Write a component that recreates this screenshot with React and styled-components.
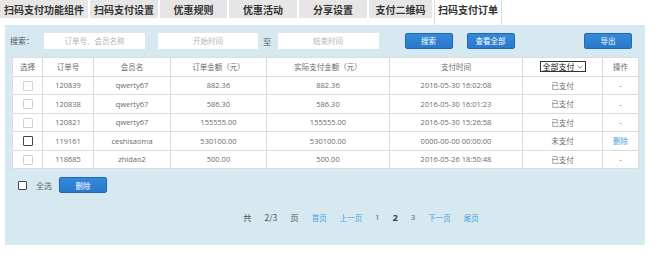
import styled, { createGlobalStyle } from "styled-components"

const Global = createGlobalStyle`
body{
margin:0;
background:#fff;
font-family:"Open Sans","Noto Sans CJK SC",sans-serif;
color:#666;
}
`;

const Tabs = styled.div`
display:flex;
gap:2px;
height:18px;
`;
const Tab = styled.div`
width:${p => p.w}px;
display:flex;
align-items:center;
justify-content:center;
font-family:"Noto Sans CJK SC",sans-serif;
font-weight:700;
font-size:10px;
color:#333;
background:${p => p.active ? "#fff" : "#e6e6e6"};
box-sizing:border-box;
border-left:${p => p.active ? "1px solid #dcdcdc" : "none"};
border-right:${p => p.active ? "1px solid #dcdcdc" : "none"};
height:${p => p.active ? "25px" : "18px"};
align-self:flex-start;
padding-bottom:${p => p.active ? "7px" : "0"};
`;

const Panel = styled.div`
margin:7px 0 0 5px;
width:640px;
height:220px;
background:#d6e9f1;
box-sizing:border-box;
`;

const SearchBar = styled.div`
display:flex;
align-items:center;
padding:7px 13px 0 5px;
height:17px;
`;
const Label = styled.span`
width:34px;
font-family:"Noto Sans CJK SC",sans-serif;
font-size:8px;
color:#555;
`;
const Input = styled.div`
width:${p => p.w}px;
height:16px;
margin-right:${p => p.mr || 0}px;
background:#fff;
display:flex;
align-items:center;
justify-content:center;
font-family:"Noto Sans CJK SC",sans-serif;
font-size:7.5px;
color:#b5b5b5;
`;
const To = styled.span`
font-family:"Noto Sans CJK SC",sans-serif;
font-size:8.5px;
color:#555;
margin:0 6px 0 5px;
`;
const Button = styled.div`
width:48px;
height:16px;
margin-left:${p => p.ml || 0};
box-sizing:border-box;
background:linear-gradient(#3689da,#2878cc);
border:1px solid #1f68b6;
border-radius:2px;
color:#fff;
font-family:"Noto Sans CJK SC",sans-serif;
font-size:7.5px;
display:flex;
align-items:center;
justify-content:center;
`;

const Table = styled.table`
margin:8px 0 0 7px;
width:626px;
border-collapse:collapse;
background:#fff;
table-layout:fixed;
`;
const Th = styled.th`
height:17.5px;
padding:0;
border:1px solid #dcdcdc;
font-weight:400;
font-family:"Noto Sans CJK SC",sans-serif;
font-size:7.5px;
color:#6a6a6a;
text-align:center;
`;
const Td = styled.td`
height:17.5px;
padding:0;
border:1px solid #dcdcdc;
font-size:7.5px;
font-family:"Open Sans","Noto Sans CJK SC",sans-serif;
color:${p => p.link ? "#4aa0dd" : "#6a6a6a"};
text-align:center;
`;
const Check = styled.span`
display:inline-block;
vertical-align:middle;
width:${p => p.size || 8}px;
height:${p => p.size || 8}px;
border:1px solid ${p => p.dark ? "#444" : "#d2d2d2"};
background:#fff;
border-radius:1px;
`;
const Select = styled.span`
display:inline-flex;
align-items:center;
gap:2px;
height:9px;
padding:0 2px;
border:1px solid #333;
font-family:"Noto Sans CJK SC",sans-serif;
font-size:8px;
color:#111;
`;

const Bottom = styled.div`
display:flex;
align-items:center;
padding-left:13px;
margin-top:8px;
height:16px;
`;
const AllText = styled.span`
font-family:"Noto Sans CJK SC",sans-serif;
font-size:8px;
color:#666;
margin:0 7px 0 9px;
`;

const Pager = styled.div`
display:flex;
align-items:center;
gap:13px;
padding-left:238px;
margin-top:18px;
height:12px;
font-family:"Noto Sans CJK SC",sans-serif;
`;
const PText = styled.span`
font-size:8.5px;
color:#555;
`;
const PLink = styled.span`
font-size:7.5px;
color:#4a9fe0;
`;
const PNum = styled.span`
font-family:"Open Sans",sans-serif;
font-size:${p => p.cur ? "9.5px" : "7.5px"};
font-weight:${p => p.cur ? 700 : 400};
color:${p => p.cur ? "#444" : "#555"};
`;

const tabs = [
  ["扫码支付功能组件", 88], ["扫码支付设置", 68], ["优惠规则", 67], ["优惠活动", 68],
  ["分享设置", 68], ["支付二维码", 63], ["扫码支付订单", 68],
]

const rows = [
  { id: "120839", name: "qwerty67", amount: "882.36", paid: "882.36", time: "2016-05-30 16:02:08", st: "已支付" },
  { id: "120838", name: "qwerty67", amount: "586.30", paid: "586.30", time: "2016-05-30 16:01:23", st: "已支付" },
  { id: "120821", name: "qwerty67", amount: "155555.00", paid: "155555.00", time: "2016-05-30 15:26:58", st: "已支付" },
  { id: "119161", name: "ceshisaoma", amount: "530100.00", paid: "530100.00", time: "0000-00-00 00:00:00", st: "未支付", unpaid: true },
  { id: "118685", name: "zhidao2", amount: "500.00", paid: "500.00", time: "2016-05-26 18:50:48", st: "已支付" },
]

const cols = [30, 51, 77, 96, 123, 133, 80, 36]

export default function App() {
  return (
    <>
      <Global />
      <Tabs>
        {tabs.map(([t, w], i) => (
          <Tab key={t} w={w} active={i === tabs.length - 1}>{t}</Tab>
        ))}
      </Tabs>
      <Panel>
        <SearchBar>
          <Label>搜索：</Label>
          <Input w={101} mr={13}>订单号、会员名称</Input>
          <Input w={100}>开始时间</Input>
          <To>至</To>
          <Input w={101}>结束时间</Input>
          <Button ml="26px">搜索</Button>
          <Button ml="14px">查看全部</Button>
          <Button ml="auto">导出</Button>
        </SearchBar>
        <Table>
          <colgroup>
            {cols.map((w, i) => <col key={i} style={{ width: w }} />)}
          </colgroup>
          <thead>
            <tr>
              <Th>选择</Th>
              <Th>订单号</Th>
              <Th>会员名</Th>
              <Th>订单金额（元）</Th>
              <Th>实际支付金额（元）</Th>
              <Th>支付时间</Th>
              <Th>
                <Select>
                  全部支付
                  <svg width="6" height="4" viewBox="0 0 6 4">
                    <path d="M0.5 0.8 L3 3.2 L5.5 0.8" fill="none" stroke="#666" strokeWidth="0.8" />
                  </svg>
                </Select>
              </Th>
              <Th>操作</Th>
            </tr>
          </thead>
          <tbody>
            {rows.map(r => (
              <tr key={r.id}>
                <Td><Check size={8} dark={r.unpaid} /></Td>
                <Td>{r.id}</Td>
                <Td>{r.name}</Td>
                <Td>{r.amount}</Td>
                <Td>{r.paid}</Td>
                <Td>{r.time}</Td>
                <Td>{r.st}</Td>
                <Td link={r.unpaid}>{r.unpaid ? "删除" : "-"}</Td>
              </tr>
            ))}
          </tbody>
        </Table>
        <Bottom>
          <Check size={7} dark />
          <AllText>全选</AllText>
          <Button>删除</Button>
        </Bottom>
        <Pager>
          <PText>共</PText>
          <PText>2/3</PText>
          <PText>页</PText>
          <PLink>首页</PLink>
          <PLink>上一页</PLink>
          <PNum>1</PNum>
          <PNum cur>2</PNum>
          <PNum>3</PNum>
          <PLink>下一页</PLink>
          <PLink>尾页</PLink>
        </Pager>
      </Panel>
    </>
  )
}
